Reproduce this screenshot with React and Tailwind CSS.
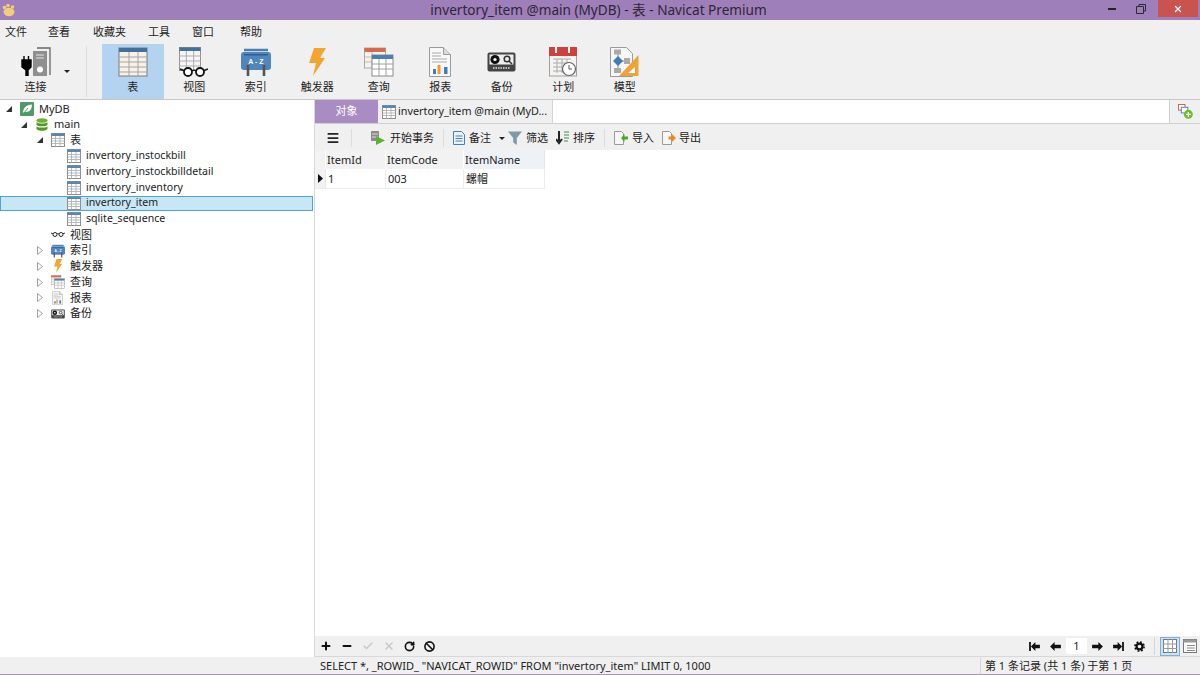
import { Plus, Minus, Check, X, RotateCw, Ban, Menu } from "lucide-react";

// toolbar and tree icons
function TableIcon({ className = "w-[14px] h-[14px] shrink-0", head = "#5b86b5" }) {
  return (
    <svg viewBox="0 0 28 28" className={className}>
      <rect x="1" y="1" width="26" height="26" fill="#fff" stroke="#8d8d8d" strokeWidth="2" />
      <rect x="1" y="1" width="26" height="5" fill={head} />
      <path d="M1 11h26M1 16h26M1 21h26M9 6v21M18 6v21" stroke="#a8a8a8" strokeWidth="1.6" />
    </svg>
  );
}

function BigTable() {
  return (
    <svg viewBox="0 0 30 30" className="w-[30px] h-[30px]">
      <rect x="1" y="1" width="28" height="28" fill="#f6f2ea" stroke="#7d7d7d" strokeWidth="1" />
      <rect x="1" y="1" width="28" height="4" fill="#41709f" />
      <path d="M1 10h28M1 15h28M1 20h28M1 25h28M11 5v24M20 5v24" stroke="#a9a49a" strokeWidth="1" />
    </svg>
  );
}

function Glasses({ className = "w-[28px] h-[12px]" }) {
  return (
    <svg viewBox="0 0 28 12" className={className}>
      <path d="M0 3l5 2M28 3l-5 2M12 5c1-1 3-1 4 0" stroke="#111" strokeWidth="1.6" fill="none" />
      <circle cx="8" cy="6" r="4" fill="#fff" stroke="#111" strokeWidth="1.8" />
      <circle cx="20" cy="6" r="4" fill="#fff" stroke="#111" strokeWidth="1.8" />
    </svg>
  );
}

function ViewIcon() {
  return (
    <div className="relative w-[30px] h-[30px]">
      <svg viewBox="0 0 24 24" className="w-[22px] h-[24px]" preserveAspectRatio="none">
        <rect x="0.5" y="0.5" width="23" height="23" fill="#f5f5f5" stroke="#8a8a8a" />
        <rect x="0.5" y="0.5" width="23" height="3.5" fill="#41709f" />
        <path d="M0 9h24M0 14h24M0 19h24M8 4v20M16 4v20" stroke="#aaa" />
      </svg>
      <div className="absolute left-[1px] bottom-[-1px]">
        <Glasses />
      </div>
    </div>
  );
}

function IndexIcon({ className = "w-[30px] h-[30px]" }) {
  return (
    <svg viewBox="0 0 30 30" className={className}>
      <path d="M3 3h24" stroke="#4a7fb5" strokeWidth="2.5" />
      <rect x="0" y="5" width="30" height="18" rx="3" fill="#4e86bd" />
      <rect x="3" y="7" width="24" height="1.5" fill="#2f5f92" />
      <text x="15" y="17" textAnchor="middle" fontSize="7" fontWeight="700" fill="#fff" fontFamily="Liberation Sans">A - Z</text>
      <path d="M7 18v11M23 18v11" stroke="#555" strokeWidth="2.6" />
    </svg>
  );
}

function Bolt({ className = "w-[18px] h-[28px]" }) {
  return (
    <svg viewBox="0 0 18 28" className={className}>
      <path d="M6 0h12l-6 10h5L5 28l3-13H1z" fill="#f3a52f" />
    </svg>
  );
}

function QueryIcon({ className = "w-[30px] h-[30px]" }) {
  return (
    <svg viewBox="0 0 30 30" className={className}>
      <rect x="0.5" y="1" width="21" height="20" fill="#f7f2ee" stroke="#a9a9a9" />
      <rect x="0.5" y="1" width="21" height="4" fill="#d9694a" />
      <path d="M1 10h20M1 15h20M8 5v16" stroke="#c8b8ae" />
      <rect x="8" y="8" width="21" height="21" fill="#fff" stroke="#8a8a8a" />
      <rect x="8" y="8" width="21" height="4" fill="#4a7fb5" />
      <path d="M8 17h21M8 22h21M15 12v17M22 12v17" stroke="#a0a0a0" />
    </svg>
  );
}

function ReportIcon({ className = "w-[22px] h-[30px]" }) {
  return (
    <svg viewBox="0 0 22 30" className={className}>
      <path d="M0.5 0.5h14l7 7v22h-21z" fill="#f8f8f8" stroke="#9a9a9a" />
      <path d="M14.5 0.5v7h7" fill="#ddd" stroke="#9a9a9a" />
      <path d="M3 6h9M3 9h9M3 12h15M3 15h15" stroke="#aaa" />
      <rect x="4" y="22" width="3" height="5" fill="#3f7fbe" />
      <rect x="8.5" y="18" width="3" height="9" fill="#f09a2b" />
      <rect x="15" y="20" width="3.5" height="7" fill="#3f7fbe" />
    </svg>
  );
}

function BackupIcon({ className = "w-[29px] h-[20px]" }) {
  return (
    <svg viewBox="0 0 29 20" className={className}>
      <rect x="0.5" y="0.5" width="28" height="19" rx="2" fill="#444" />
      <rect x="2.5" y="2.5" width="24" height="10" fill="#eee" />
      <circle cx="8" cy="7.5" r="4.6" fill="#111" />
      <circle cx="8" cy="7.5" r="1.6" fill="#fff" />
      <circle cx="20" cy="7" r="2.8" fill="none" stroke="#333" strokeWidth="1.5" />
      <path d="M22 9l3 3" stroke="#333" strokeWidth="1.5" />
      <path d="M6 16h17" stroke="#bbb" strokeWidth="2" strokeDasharray="1.5 1" />
    </svg>
  );
}

function PlanIcon() {
  return (
    <svg viewBox="0 0 28 30" className="w-[28px] h-[30px]">
      <rect x="0.5" y="1" width="27" height="28" fill="#f5f3f1" stroke="#a0a0a0" />
      <rect x="0" y="0" width="28" height="9" fill="#cf3f3b" />
      <path d="M7 0v6M20 0v6" stroke="#fff" strokeWidth="2" />
      <path d="M4 12h18M4 16h18M4 20h18M4 24h18M8 12v14M13 12v14M18 12v14" stroke="#aaa" />
      <circle cx="20" cy="22" r="6.5" fill="#fff" stroke="#666" strokeWidth="1.2" />
      <path d="M20 18v4h3" stroke="#555" fill="none" />
    </svg>
  );
}

function ModelIcon() {
  return (
    <svg viewBox="0 0 29 30" className="w-[29px] h-[30px]">
      <path d="M0.5 0.5h16l6 6v23h-22z" fill="#f7f7f7" stroke="#9a9a9a" />
      <path d="M8 4v22M8 14h11" stroke="#888" />
      <rect x="4" y="2.5" width="7" height="5" fill="#aaa" />
      <path d="M8 9l5 5-5 5-5-5z" fill="#3f7cbb" />
      <rect x="14" y="11" width="6" height="6" fill="#aaa" />
      <rect x="4" y="21" width="7" height="5" fill="#aaa" />
      <path d="M28.5 8v21H9z" fill="#f0a23a" />
      <path d="M25 20v6h-7z" fill="#fff" />
    </svg>
  );
}

function ConnectIcon() {
  return (
    <svg viewBox="0 0 30 30" className="w-[30px] h-[30px]">
      <path d="M16 2h13v27" fill="none" stroke="#666" strokeWidth="1.3" />
      <rect x="12" y="5" width="14" height="25" fill="#8f8f8f" />
      <path d="M15 9h8M15 12h8" stroke="#e5e5e5" />
      <circle cx="19" cy="23.5" r="3" fill="#fff" />
      <path d="M1 14h9v7l-3 3v6H5v-6l-4-3zM3 10v4M7.5 10v4" fill="#000" stroke="#000" strokeWidth="1.4" />
    </svg>
  );
}

function LeafIcon() {
  return (
    <svg viewBox="0 0 14 14" className="w-[14px] h-[14px]">
      <rect width="14" height="14" rx="1" fill="#4f9a6a" />
      <path d="M3 11C3 6 6 3 12 2.5 12 8 9 10.5 4.5 10z" fill="#fff" />
      <path d="M3 12l5-6" stroke="#4f9a6a" />
    </svg>
  );
}

function DbIcon() {
  return (
    <svg viewBox="0 0 12 13" className="w-[12px] h-[13px]">
      <ellipse cx="6" cy="2.5" rx="5.5" ry="2.3" fill="#6fb12f" />
      <path d="M0.5 4.2C2 6 10 6 11.5 4.2V7C10 8.8 2 8.8 0.5 7z" fill="#4f9a22" />
      <path d="M0.5 8.4C2 10 10 10 11.5 8.4V11C10 13.4 2 13.4 0.5 11z" fill="#4f9a22" />
    </svg>
  );
}

function Arrow({ open }) {
  if (open) {
    return (
      <svg viewBox="0 0 6 6" className="w-[6px] h-[6px]">
        <path d="M6 0v6H0z" fill="#333" />
      </svg>
    );
  }
  return (
    <svg viewBox="0 0 6 9" className="w-[6px] h-[9px]">
      <path d="M0.5 0.5l5 4-5 4z" fill="#fff" stroke="#a0a0a0" />
    </svg>
  );
}

const toolbarItems = [
  { label: "表", icon: <BigTable />, active: true },
  { label: "视图", icon: <ViewIcon /> },
  { label: "索引", icon: <IndexIcon /> },
  { label: "触发器", icon: <Bolt /> },
  { label: "查询", icon: <QueryIcon /> },
  { label: "报表", icon: <ReportIcon /> },
  { label: "备份", icon: <BackupIcon /> },
  { label: "计划", icon: <PlanIcon /> },
  { label: "模型", icon: <ModelIcon /> },
];

const menus = [
  { label: "文件", w: "w-[43px]" },
  { label: "查看", w: "w-[45px]" },
  { label: "收藏夹", w: "w-[55px]" },
  { label: "工具", w: "w-[44px]" },
  { label: "窗口", w: "w-[48px]" },
  { label: "帮助", w: "w-[40px]" },
];

const tables = ["invertory_instockbill", "invertory_instockbilldetail", "invertory_inventory", "invertory_item", "sqlite_sequence"];

function TreeRow({ pad, arrow, icon, label, selected, small }) {
  return (
    <div
      className={`flex items-center h-[15.75px] whitespace-nowrap ${pad} ${
        selected ? "bg-[#c7e6f6] outline outline-1 -outline-offset-1 outline-[#4fa3cf] w-[313px]" : ""
      }`}
    >
      <div className="w-[10px] flex items-center justify-center shrink-0">{arrow}</div>
      <div className="w-[21px] ml-[2px] flex items-center justify-center shrink-0">{icon}</div>
      <span className={`ml-[2px] text-[#222] ${small ? "text-[10.6px]" : "text-[11px]"}`}>{label}</span>
    </div>
  );
}

function PagerIcon({ d }) {
  return (
    <svg viewBox="0 0 12 10" className="w-[11px] h-[9px]">
      <path d={d} fill="#111" />
    </svg>
  );
}

export default function App() {
  return (
    <div className="w-[1200px] h-[675px] flex flex-col overflow-hidden bg-white text-[#222] font-['Noto_Sans','Noto_Sans_CJK_SC',sans-serif]">
      {/* title bar */}
      <div className="h-[20px] bg-[#9e7fb9] flex items-center shrink-0">
        <svg viewBox="0 0 14 14" className="w-[14px] h-[14px] ml-[2px]">
          <ellipse cx="7" cy="9" rx="5.5" ry="4.2" fill="#f0cf7a" />
          <circle cx="2.5" cy="4.5" r="1.8" fill="#f0cf7a" />
          <circle cx="6" cy="2.5" r="1.8" fill="#f0cf7a" />
          <circle cx="10.5" cy="4" r="1.8" fill="#f0cf7a" />
        </svg>
        <div className="flex-1 text-center text-[13.6px] leading-[20px] text-[#2e2636] pl-[73px]">invertory_item @main (MyDB) - 表 - Navicat Premium</div>
        <div className="flex items-center h-[17px] self-start">
          <svg viewBox="0 0 8 3" className="w-[8px] h-[3px] mr-[20px] mt-[2px]">
            <rect width="8" height="2" fill="#222" />
          </svg>
          <svg viewBox="0 0 10 10" className="w-[10px] h-[10px] mr-[12px]">
            <path d="M3 2.5V0.5h6.5V7H7.5M0.5 2.5h7v7h-7z" fill="none" stroke="#2b2b2b" />
          </svg>
          <div className="w-[40px] h-[17px] mr-[2px] bg-[#c8534f] flex items-center justify-center">
            <X className="w-[10px] h-[10px] text-white" strokeWidth={3} />
          </div>
        </div>
      </div>

      {/* menu */}
      <div className="h-[24px] bg-[#f0f0f0] flex items-center pl-[5px] text-[11px] shrink-0">
        {menus.map((m) => (
          <div key={m.label} className={m.w}>{m.label}</div>
        ))}
      </div>

      {/* toolbar */}
      <div className="h-[55px] bg-[#f0f0f0] flex border-b border-[#c8c8c8] shrink-0 box-content">
        <div className="w-[87px] flex flex-col items-center pr-[15px] border-r border-[#dcdcdc] my-[2px] relative">
          <div className="h-[33px] flex items-start"><ConnectIcon /></div>
          <div className="text-[11px] leading-[16px]">连接</div>
          <svg viewBox="0 0 6 3" className="absolute left-[64px] top-[24px] w-[6px] h-[3px]">
            <path d="M0 0h6L3 3z" fill="#222" />
          </svg>
        </div>
        <div className="w-[15px]" />
        {toolbarItems.map((it) => (
          <div
            key={it.label}
            className={`w-[61.5px] flex flex-col items-center ${it.active ? "bg-[#b3d3f0]" : ""}`}
          >
            <div className="h-[34px] mt-[1px] flex items-center justify-center">{it.icon}</div>
            <div className="text-[11px] leading-[16px]">{it.label}</div>
          </div>
        ))}
      </div>

      {/* main */}
      <div className="flex-1 flex min-h-0">
        {/* tree */}
        <div className="w-[315px] border-r border-[#d9d9d9] pt-[1px] shrink-0">
          <TreeRow pad="pl-[4px]" arrow={<Arrow open />} icon={<LeafIcon />} label="MyDB" />
          <TreeRow pad="pl-[19px]" arrow={<Arrow open />} icon={<DbIcon />} label="main" />
          <TreeRow pad="pl-[35px]" arrow={<Arrow open />} icon={<TableIcon />} label="表" />
          {tables.map((t) => (
            <TreeRow key={t} pad="pl-[51px]" icon={<TableIcon />} label={t} small selected={t === "invertory_item"} />
          ))}
          <TreeRow pad="pl-[35px]" icon={<Glasses className="w-[14px] h-[7px]" />} label="视图" />
          <TreeRow pad="pl-[35px]" arrow={<Arrow />} icon={<IndexIcon className="w-[14px] h-[14px]" />} label="索引" />
          <TreeRow pad="pl-[35px]" arrow={<Arrow />} icon={<Bolt className="w-[10px] h-[14px]" />} label="触发器" />
          <TreeRow pad="pl-[35px]" arrow={<Arrow />} icon={<QueryIcon className="w-[14px] h-[14px]" />} label="查询" />
          <TreeRow pad="pl-[35px]" arrow={<Arrow />} icon={<ReportIcon className="w-[11px] h-[14px]" />} label="报表" />
          <TreeRow pad="pl-[35px]" arrow={<Arrow />} icon={<BackupIcon className="w-[14px] h-[12px]" />} label="备份" />
        </div>

        {/* right pane */}
        <div className="flex-1 flex flex-col min-w-0">
          {/* tabs */}
          <div className="h-[24px] flex border-b border-[#cfcfcf] shrink-0">
            <div className="w-[63px] bg-[#a98cc4] text-white text-[11px] flex items-center justify-center">对象</div>
            <div className="w-[175px] bg-[#f0f0f0] flex items-center pl-[4px] gap-[2px] border-r border-[#d5d5d5]">
              <TableIcon />
              <span className="text-[10.8px] whitespace-nowrap">invertory_item @main (MyD...</span>
            </div>
            <div className="flex-1 bg-white" />
            <div className="w-[31px] bg-[#f0f0f0] border-l border-[#cfcfcf] flex items-center justify-center">
              <svg viewBox="0 0 16 16" className="w-[15px] h-[15px]">
                <rect x="0.5" y="0.5" width="7" height="6" fill="#fff" stroke="#c8604a" />
                <rect x="3.5" y="3.5" width="7" height="6" fill="#fff" stroke="#4a7fb5" />
                <circle cx="11" cy="11" r="4.8" fill="#6cbf2a" />
                <path d="M8.5 11h5M11 8.5v5" stroke="#fff" strokeWidth="1.4" />
              </svg>
            </div>
          </div>

          {/* object toolbar */}
          <div className="h-[26px] pt-[2px] bg-[#f0f0f0] flex items-center text-[11px] shrink-0 whitespace-nowrap">
            <Menu className="w-[14px] h-[14px] ml-[11px] text-[#222]" strokeWidth={3} />
            <div className="w-px h-[18px] bg-[#dcdcdc] ml-[11px]" />
            <svg viewBox="0 0 14 14" className="w-[14px] h-[14px] ml-[19px]">
              <rect x="0" y="0" width="8" height="10" rx="1" fill="#8a8a8a" />
              <path d="M1 3h6M1 6h6" stroke="#ddd" />
              <path d="M5 5l9 4.5L5 14z" fill="#58b52a" />
            </svg>
            <span className="ml-[5px]">开始事务</span>
            <div className="w-px h-[18px] bg-[#dcdcdc] ml-[9px]" />
            <svg viewBox="0 0 12 14" className="w-[12px] h-[14px] ml-[9px]">
              <path d="M0.5 0.5h8l3 3v10h-11z" fill="#eaf2fa" stroke="#4a7fb5" />
              <path d="M2.5 5h7M2.5 7.5h7M2.5 10h7" stroke="#4a7fb5" />
            </svg>
            <span className="ml-[4px]">备注</span>
            <svg viewBox="0 0 6 3" className="w-[6px] h-[3px] ml-[8px]"><path d="M0 0h6L3 3z" fill="#222" /></svg>
            <svg viewBox="0 0 14 14" className="w-[14px] h-[14px] ml-[3px]">
              <path d="M0 0.5h14L8.8 7v7L5.2 11.5V7z" fill="#7f9aa6" />
            </svg>
            <span className="ml-[4px]">筛选</span>
            <svg viewBox="0 0 14 14" className="w-[14px] h-[14px] ml-[8px]">
              <path d="M3 0v10M0 8l3 4 3-4" stroke="#222" strokeWidth="2" fill="none" />
              <path d="M8 1h5M8 4h5M8 7h5M8 10h4" stroke="#7fa98a" strokeWidth="1.4" />
            </svg>
            <span className="ml-[3px]">排序</span>
            <div className="w-px h-[18px] bg-[#dcdcdc] ml-[9px]" />
            <svg viewBox="0 0 14 14" className="w-[14px] h-[14px] ml-[9px]">
              <path d="M0.5 0.5h7l2 2v11h-9z" fill="#f7f7f7" stroke="#999" />
              <path d="M7 7l3.5-4v2.5H14v3h-3.5V11z" fill="#4fa52e" />
            </svg>
            <span className="ml-[4px]">导入</span>
            <svg viewBox="0 0 14 14" className="w-[14px] h-[14px] ml-[8px]">
              <path d="M0.5 0.5h7l2 2v11h-9z" fill="#f7f7f7" stroke="#999" />
              <path d="M14 7l-4-4v2.5H6.5v3H10V11z" fill="#ee8a22" />
            </svg>
            <span className="ml-[3px]">导出</span>
          </div>

          {/* grid */}
          <div className="flex-1 min-h-0 bg-white text-[11px]">
            <div className="flex h-[19px] w-[230px] bg-[#f2f2f2]">
              <div className="w-[11px] border-r border-white" />
              <div className="w-[60px] flex items-center pl-[1px] pt-[1px] border-r border-white">ItemId</div>
              <div className="w-[78px] flex items-center pl-[1px] pt-[1px] border-r border-white">ItemCode</div>
              <div className="w-[81px] flex items-center pl-[1px] pt-[1px] border-r border-[#e4e4e4] bg-[#eef2f7]">ItemName</div>
            </div>
            <div className="flex h-[20px] w-[230px] border-b border-[#ededed]">
              <div className="w-[11px] bg-[#f2f2f2] flex items-center justify-center border-r border-[#e8e8e8]">
                <svg viewBox="0 0 5 9" className="w-[5px] h-[9px]"><path d="M0 0l5 4.5L0 9z" fill="#111" /></svg>
              </div>
              <div className="w-[60px] flex items-center pl-[2px] pt-[1px] border-r border-[#ededed]">1</div>
              <div className="w-[78px] flex items-center pl-[2px] pt-[1px] border-r border-[#ededed]">003</div>
              <div className="w-[81px] flex items-center pl-[2px] pt-[1px] border-r border-[#ededed]">螺帽</div>
            </div>
          </div>

          {/* bottom toolbar */}
          <div className="h-[21px] bg-[#f0f0f0] flex items-center shrink-0 border-b border-[#d8d8d8]">
            <div className="flex items-center gap-[9px] pl-[5px]">
              <Plus className="w-[12px] h-[12px] text-[#111]" strokeWidth={4} />
              <Minus className="w-[12px] h-[12px] text-[#111]" strokeWidth={4} />
              <Check className="w-[12px] h-[12px] text-[#c8c8c8]" strokeWidth={3} />
              <X className="w-[12px] h-[12px] text-[#c8c8c8]" strokeWidth={3} />
              <RotateCw className="w-[11px] h-[11px] text-[#111]" strokeWidth={3.5} />
              <Ban className="w-[11px] h-[11px] text-[#111]" strokeWidth={3.5} />
            </div>
            <div className="flex-1" />
            <div className="flex items-center">
              <PagerIcon d="M0 0h2v10H0zM2 5l5-5v3h5v4H7v3z" />
              <div className="w-[10px]" />
              <PagerIcon d="M0 5l5-5v3h7v4H5v3z" />
              <div className="w-[5px]" />
              <div className="w-[21px] h-[16px] bg-white text-[11px] flex items-center justify-center">1</div>
              <div className="w-[5px]" />
              <PagerIcon d="M12 5L7 0v3H0v4h7v3z" />
              <div className="w-[10px]" />
              <PagerIcon d="M12 0h-2v10h2zM10 5L5 0v3H0v4h5v3z" />
              <div className="w-[10px]" />
              <svg viewBox="0 0 12 12" className="w-[11px] h-[11px]">
                <circle cx="6" cy="6" r="3.2" fill="none" stroke="#111" strokeWidth="2.4" />
                <circle cx="6" cy="6" r="5" fill="none" stroke="#111" strokeWidth="1.8" strokeDasharray="2 1.93" />
              </svg>
              <div className="w-px h-[18px] bg-[#d5d5d5] ml-[9px]" />
              <div className="ml-[5px] w-[20px] h-[19px] bg-[#cfe2f5] border border-[#7fb0dc] flex items-center justify-center">
                <svg viewBox="0 0 14 14" className="w-[14px] h-[14px]">
                  <rect x="0.5" y="0.5" width="13" height="13" fill="#fff" stroke="#777" />
                  <path d="M0 5h14M0 9.5h14M5 0v14M9.5 0v14" stroke="#999" />
                </svg>
              </div>
              <svg viewBox="0 0 14 14" className="w-[14px] h-[14px] mx-[3px]">
                <rect x="0.5" y="0.5" width="13" height="13" fill="#fff" stroke="#777" />
                <rect x="0.5" y="0.5" width="13" height="3" fill="#999" />
                <path d="M4 6.5h8M4 9h8M4 11.5h8" stroke="#888" />
              </svg>
            </div>
          </div>
        </div>
      </div>

      {/* status bar */}
      <div className="h-[18px] pt-[1px] bg-[#f0f0f0] flex items-center text-[11px] shrink-0 whitespace-nowrap border-b border-[#a795b8]">
        <div className="w-[980px] pl-[320px]">SELECT *, _ROWID_ "NAVICAT_ROWID" FROM "invertory_item" LIMIT 0, 1000</div>
        <div className="pl-[4px] border-l border-[#d5d5d5]">第 1 条记录 (共 1 条) 于第 1 页</div>
      </div>
    </div>
  );
}
